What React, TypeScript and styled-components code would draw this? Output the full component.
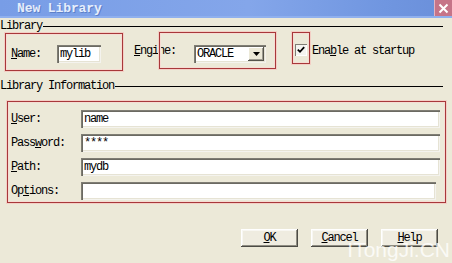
import React from 'react'
import styled, { createGlobalStyle } from 'styled-components'

const GlobalStyle = createGlobalStyle`
  html, body {
    margin:0;
    padding:0;
  }
  body {
    width:452px;
    height:263px;
    overflow:hidden;
    background:#ece9d8;
    font-family:"Liberation Mono", "Noto Sans CJK SC", monospace;
    font-size:12px;
    letter-spacing:-1.2px;
    color:#000;
  }
`

const Dialog = styled.div`
  position:relative;
  width:452px;
  height:263px;
  display:flex;
  flex-direction:column;
`

const TitleBar = styled.div`
  height:18px;
  display:flex;
  justify-content:space-between;
  align-items:flex-start;
  background:linear-gradient(to right, #789de6 0%, #84a6ea 55%, #7096e0 85%, #6a8fda 100%);
  box-shadow:inset 0 -2px 0 #8fb0ee;
`

const Title = styled.div`
  padding-left:17px;
  font-size:13px;
  font-weight:bold;
  letter-spacing:-0.1px;
  line-height:17px;
  color:#e6eefc;
  text-shadow:1px 1px 0 #5d80c8;
`

const CloseBtn = styled.div`
  width:17px;
  height:16px;
  display:flex;
  align-items:center;
  justify-content:center;
  background:#c67488;
  border-left:1px solid #e4b4c2;
`

const Body = styled.div`
  display:flex;
  flex-direction:column;
`

const GroupHeader = styled.div<{ $top: number }>`
  display:flex;
  align-items:center;
  height:12px;
  line-height:12px;
  margin-top:${p => p.$top}px;
  padding-right:9px;
  white-space:nowrap;

  &::after {
    content:"";
    flex:1;
    height:1px;
    margin-left:1px;
    background:#000;
  }
`

const Row = styled.div`
  display:flex;
  align-items:flex-start;
`

const RedBox = styled.div`
  box-sizing:border-box;
  border:1px solid #a8383a;
  box-shadow:0 0 0 1px #f3cfc5, inset 0 0 0 1px #f6dcd3;
`

const NameBox = styled(RedBox)`
  display:flex;
  align-items:center;
  margin:1px 0 0 5px;
  width:118px;
  height:38px;
  padding:4px 0 0 5px;
`

const Label = styled.span<{ $w?: number }>`
  display:inline-block;
  width:${p => (p.$w ? `${p.$w}px` : 'auto')};
  line-height:12px;
  white-space:nowrap;
`

const SideLabel = styled(Label)<{ $ml: number; $mr?: number }>`
  margin-top:13px;
  margin-left:${p => p.$ml}px;
  margin-right:${p => p.$mr ?? 0}px;
`

const TextInput = styled.div<{ $w?: number; $mr?: number }>`
  box-sizing:border-box;
  width:${p => (p.$w ? `${p.$w}px` : 'auto')};
  margin-right:${p => p.$mr ?? 0}px;
  height:18px;
  padding:3px 0 0 3px;
  line-height:12px;
  background:#fff;
  white-space:nowrap;
  box-shadow:inset 1px 1px 0 #7f7d74, inset 2px 2px 0 #6b6a62, inset -1px -1px 0 #f4f3ee, inset -2px -2px 0 #e6e3d4;
`

const EngineBox = styled(RedBox)`
  display:flex;
  align-items:center;
  width:117px;
  height:37px;
  padding:6px 0 0 34px;
`

const Select = styled.div`
  box-sizing:border-box;
  display:flex;
  width:72px;
  height:18px;
  padding:2px;
  background:#fff;
  box-shadow:inset 1px 1px 0 #7f7d74, inset 2px 2px 0 #6b6a62, inset -1px -1px 0 #f4f3ee, inset -2px -2px 0 #e6e3d4;
`

const SelectValue = styled.div`
  flex:1;
  padding:1px 0 0 1px;
  line-height:12px;
`

const DropBtn = styled.div`
  box-sizing:border-box;
  width:16px;
  height:14px;
  display:flex;
  align-items:center;
  justify-content:center;
  background:#ece9d8;
  box-shadow:inset -1px -1px 0 #55544c, inset 1px 1px 0 #fff, inset -2px -2px 0 #9d9b90;
`

const CheckBox = styled(RedBox)`
  margin-left:16px;
  width:18px;
  height:32px;
  padding:11px 0 0 2px;
`

const Check = styled.div`
  box-sizing:border-box;
  width:12px;
  height:12px;
  display:flex;
  align-items:center;
  justify-content:center;
  background:#f4f4f0;
  box-shadow:inset 1px 1px 0 #7f7d74, inset -1px -1px 0 #fff;
`

const InfoBox = styled(RedBox)`
  display:grid;
  grid-template-columns:70px 1fr;
  grid-auto-rows:18px;
  row-gap:6px;
  align-items:center;
  margin:9px 0 0 7px;
  width:439px;
  padding:8px 5px 2px 3px;
`

const ButtonRow = styled.div`
  display:flex;
  justify-content:flex-end;
  gap:13px;
  margin-top:26px;
  padding-right:14px;
`

const Button = styled.div`
  box-sizing:border-box;
  width:57px;
  height:18px;
  display:flex;
  align-items:center;
  justify-content:center;
  line-height:12px;
  background:#efece0;
  box-shadow:inset -1px -1px 0 #4c4b45, inset 1px 1px 0 #fff, inset -2px -2px 0 #8f8d82, inset 2px 2px 0 #f8f7f2;
`

const Watermark = styled.div`
  position:absolute;
  right:2px;
  bottom:1px;
  font-family:"Liberation Sans", Arial, sans-serif;
  font-size:21px;
  letter-spacing:0;
  color:rgba(255, 255, 255, 0.78);
  white-space:nowrap;
`

const rows = [
  { pre: '', key: 'U', post: 'ser:', value: 'name' },
  { pre: 'Pass', key: 'w', post: 'ord:', value: '****' },
  { pre: '', key: 'P', post: 'ath:', value: 'mydb' },
  { pre: 'Op', key: 't', post: 'ions:', value: '' },
]

const App = () => {
  return (
    <Dialog>
      <GlobalStyle />
      <TitleBar>
        <Title>New Library</Title>
        <CloseBtn>
          <svg width="11" height="11" viewBox="0 0 11 11">
            <path d="M1.5 1.5 L9.5 9.5 M9.5 1.5 L1.5 9.5" stroke="#fff" strokeWidth="2" />
          </svg>
        </CloseBtn>
      </TitleBar>

      <Body>
        <GroupHeader $top={2}>Library</GroupHeader>
        <Row>
          <NameBox>
            <Label $w={46}><u>N</u>ame:</Label>
            <TextInput $w={44}>mylib</TextInput>
          </NameBox>
          <SideLabel $ml={11} $mr={-17}><u>E</u>ngine:</SideLabel>
          <EngineBox>
            <Select>
              <SelectValue>ORACLE</SelectValue>
              <DropBtn>
                <svg width="7" height="4" viewBox="0 0 7 4">
                  <path d="M0 0 H7 L3.5 4 Z" fill="#000" />
                </svg>
              </DropBtn>
            </Select>
          </EngineBox>
          <CheckBox>
            <Check>
              <svg width="8" height="8" viewBox="0 0 8 8">
                <path d="M0.8 3.6 L3 5.8 L7.2 1.2" stroke="#000" strokeWidth="1.8" fill="none" />
              </svg>
            </Check>
          </CheckBox>
          <SideLabel $ml={2}>Ena<u>b</u>le at startup</SideLabel>
        </Row>

        <GroupHeader $top={9}>Library Information</GroupHeader>
        <InfoBox>
          {rows.map((r, i) => (
            <React.Fragment key={i}>
              <Label>{r.pre}<u>{r.key}</u>{r.post}</Label>
              <TextInput $mr={i === 3 ? 4 : 0}>{r.value}</TextInput>
            </React.Fragment>
          ))}
        </InfoBox>

        <ButtonRow>
          <Button><u>O</u>K</Button>
          <Button><u>C</u>ancel</Button>
          <Button><u>H</u>elp</Button>
        </ButtonRow>
      </Body>

      <Watermark>ITongJi.CN</Watermark>
    </Dialog>
  )
}

export default App
